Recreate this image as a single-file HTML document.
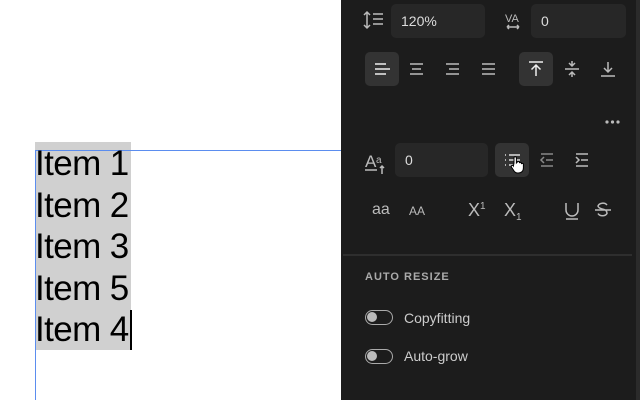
<!DOCTYPE html>
<html><head><style>
*{margin:0;padding:0;box-sizing:border-box}
body{width:640px;height:400px;overflow:hidden;background:#fff;position:relative;font-family:"Liberation Sans",sans-serif}
.a{position:absolute}
#panel{left:341px;top:0;width:295px;height:400px;background:#1c1c1c}
#rb{left:636px;top:0;width:4px;height:400px;background:#2b2b2b}
.inp{position:absolute;background:#272727;border-radius:5px;color:#ddd;font-size:14px;line-height:34px;padding-left:10px;height:34px}
.btn{position:absolute;width:34px;height:34px;border-radius:5px;background:#333}
.t{position:absolute;color:#bbb}
.items{left:35px;top:142px;width:96px;height:208px;background:#d0d0d0}
.txt{left:35px;top:143px;font-size:35px;letter-spacing:-0.6px;line-height:41.5px;color:#000}
.tog{position:absolute;width:28px;height:15px;border:1.5px solid #aaa;border-radius:8px}
.tog:after{content:"";position:absolute;left:1px;top:1px;width:10px;height:10px;border-radius:50%;background:#bbb}
.lbl{position:absolute;color:#ccc;font-size:14px}
</style></head><body>
<div class="a items"></div>
<div class="a" style="left:35px;top:150px;width:306px;height:1px;background:#5b8def"></div>
<div class="a" style="left:35px;top:150px;width:1px;height:250px;background:#5b8def"></div>
<div class="a txt">Item 1<br>Item 2<br>Item 3<br>Item 5<br>Item 4</div>
<div class="a" style="left:130px;top:310px;width:2px;height:40px;background:#000"></div>

<div class="a" id="panel"></div>
<div class="a" id="rb"></div>

<svg class="a" style="left:341px;top:0" width="295" height="255" fill="none" stroke="#bbb" stroke-width="1.5">
<path d="M26 13v14M23 15l3-3 3 3M23 25l3 3 3-3M32 14h10M32 19h10M32 24h10"/>
<text x="164" y="22" fill="#bbb" stroke="none" font-size="11" font-family="Liberation Sans">VA</text>
<path d="M166 27h12M166 27l2-2M166 27l2 2M178 27l-2-2M178 27l-2 2"/>
<path stroke="#eee" d="M34 64h11M34 69h15M34 74h11"/>
<path d="M69 64h13M71 69h9M69 74h13"/>
<path d="M105 64h13M108 69h10M105 74h13"/>
<path d="M141 64h13M141 69h13M141 74h13"/>
<path d="M224 69h14M231 61v5M228 63l3 3 3-3M231 77v-5M228 75l3-3 3 3"/>
<path d="M260 76h14M267 62v10M263 68l4 4 4-4"/>
<text x="24" y="167" fill="#bbb" stroke="none" font-size="17" font-family="Liberation Sans">A</text>
<text x="35" y="163" fill="#bbb" stroke="none" font-size="10" font-family="Liberation Sans">a</text>
<path d="M24 170h12M41 166v8M39 168l2-2 2 2"/>
<path stroke="#888" d="M200 154h12M205 160h7M200 166h12M203 157l-3 3 3 3"/>
<path d="M235 154h12M240 160h7M235 166h12M235 157l3 3-3 3"/>
<path d="M225 203v7a6 6 0 0 0 12 0v-7M225 219h12"/>
<path d="M266 205a5 4 0 0 0-9 1c0 2 4 3 6 3.5s3 2 3 4a5 4 0 0 1-9 0M254 210h16"/>
</svg>
<div class="inp" style="left:391px;top:4px;width:94px">120%</div>
<div class="inp" style="left:531px;top:4px;width:95px">0</div>
<div class="btn" style="left:365px;top:52px"></div>
<div class="btn" style="left:519px;top:52px"></div>
<svg class="a" style="left:365px;top:52px" width="34" height="34" fill="none" stroke="#eee" stroke-width="1.5"><path d="M10 12h11M10 17h15M10 22h11"/></svg>
<svg class="a" style="left:519px;top:52px" width="34" height="34" fill="none" stroke="#eee" stroke-width="1.5"><path d="M10 10h14M17 24v-11M12.5 17.5l4.5-4.5 4.5 4.5"/></svg>
<svg class="a" style="left:604px;top:119px" width="20" height="6"><circle cx="3" cy="3" r="1.6" fill="#bbb"/><circle cx="8.5" cy="3" r="1.6" fill="#bbb"/><circle cx="14" cy="3" r="1.6" fill="#bbb"/></svg>
<div class="inp" style="left:395px;top:143px;width:93px">0</div>
<div class="btn" style="left:495px;top:143px"></div>
<svg class="a" style="left:495px;top:143px" width="34" height="40" fill="none" stroke="#ddd" stroke-width="1.5"><path d="M10 12h1M10 17h1M10 22h1M14 12h11M14 17h11M14 22h11"/><path fill="#fff" stroke="#000" stroke-width="1" d="M19 20v-5a1.2 1.2 0 0 1 2.4 0v5l1-1a1.1 1.1 0 0 1 2 0v1a1.1 1.1 0 0 1 2 0v1a1.1 1.1 0 0 1 2 0v4c0 3-2 5-5 5h-1c-2 0-3-1-4-3l-2-3a1.1 1.1 0 0 1 2-1z"/></svg>
<div class="t" style="left:372px;top:201px;font-size:16px">aa</div>
<div class="t" style="left:409px;top:204px;font-size:12px">AA</div>
<div class="t" style="left:468px;top:200px;font-size:18px">X<span style="font-size:10px;vertical-align:7px">1</span></div>
<div class="t" style="left:504px;top:200px;font-size:18px">X<span style="font-size:10px;vertical-align:-4px">1</span></div>
<div class="a" style="left:343px;top:254px;width:289px;height:2px;background:#2e2e2e"></div>
<div class="t" style="left:365px;top:271px;font-size:11px;font-weight:bold;letter-spacing:1px;color:#aaa">AUTO RESIZE</div>
<div class="tog" style="left:365px;top:310px"></div>
<div class="lbl" style="left:404px;top:310px">Copyfitting</div>
<div class="tog" style="left:365px;top:349px"></div>
<div class="lbl" style="left:404px;top:348px">Auto-grow</div>
</body></html>
